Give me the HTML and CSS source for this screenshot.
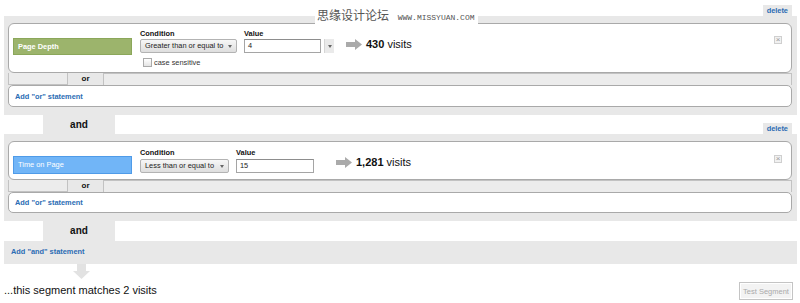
FILE: index.html
```html
<!DOCTYPE html>
<html lang="en">
<head>
  <meta charset="UTF-8" />
  <title>Advanced Segment</title>
  <link rel="stylesheet" href="styles.css">
</head>
<body>
  <div class="page">
    <div class="wm">思缘设计论坛 <span>WWW.MISSYUAN.COM</span></div>

    <div class="tabs top">
      <a class="delete" href="#">delete</a>
    </div>
    <div class="group">
      <div class="card cond first">
        <div class="field green">Page Depth</div>
        <div class="col">
          <div class="lbl">Condition</div>
          <div class="select gte">Greater than or equal to<span class="caret"></span></div>
          <div class="check"><span class="box"></span>case sensitive</div>
        </div>
        <div class="col">
          <div class="lbl">Value</div>
          <div class="value-row">
            <div class="input v1">4</div>
            <div class="drop"><span class="caret"></span></div>
          </div>
        </div>
        <div class="result r1">
          <svg width="16" height="11" viewBox="0 0 16 11"><path d="M0 3h9V0l7 5.5-7 5.5V8H0z" fill="#aaa"/></svg>
          <span><b>430</b> visits</span>
        </div>
        <span class="close">&times;</span>
      </div>
      <div class="or-row">
        <div class="or-side left"></div>
        <div class="or">or</div>
        <div class="or-side right"></div>
      </div>
      <div class="card add"><a href="#">Add "or" statement</a></div>
    </div>

    <div class="tabs">
      <div class="and">and</div>
      <a class="delete" href="#">delete</a>
    </div>
    <div class="group">
      <div class="card cond second">
        <div class="field blue">Time on Page</div>
        <div class="col">
          <div class="lbl">Condition</div>
          <div class="select lte">Less than or equal to<span class="caret"></span></div>
        </div>
        <div class="col">
          <div class="lbl">Value</div>
          <div class="input v2">15</div>
        </div>
        <div class="result r2">
          <svg width="16" height="11" viewBox="0 0 16 11"><path d="M0 3h9V0l7 5.5-7 5.5V8H0z" fill="#aaa"/></svg>
          <span><b>1,281</b> visits</span>
        </div>
        <span class="close">&times;</span>
      </div>
      <div class="or-row">
        <div class="or-side left"></div>
        <div class="or">or</div>
        <div class="or-side right"></div>
      </div>
      <div class="card add short"><a href="#">Add "or" statement</a></div>
    </div>

    <div class="tabs last">
      <div class="and">and</div>
    </div>
    <div class="add-and"><a href="#">Add "and" statement</a></div>

    <svg class="down" width="17" height="15" viewBox="0 0 17 15"><path d="M4 0h9v7h4l-8.5 8L0 7h4z" fill="#e2e2e2"/></svg>

    <div class="footer">
      <div class="summary">...this segment matches 2 visits</div>
      <button class="test" type="button">Test Segment</button>
    </div>
  </div>
</body>
</html>
```

FILE: styles.css
```css
body {
  margin: 0;
  font-family: "Liberation Sans", Arial, sans-serif;
  font-size: 7.4px;
  color: #222;
  background: #fff;
}
a {
  color: #2c6cb4;
  text-decoration: none;
  font-weight: bold;
}
.page {
  position: relative;
  width: 793px;
  padding-left: 4px;
}

/* watermark */
.wm {
  position: absolute;
  left: 315px;
  top: 8px;
  background: #fff;
  padding: 0 3px 1px 2px;
  color: #555;
  font-family: "Noto Sans CJK SC", sans-serif;
  font-size: 12px;
  line-height: 14px;
}
.wm span {
  font-family: "Liberation Mono", monospace;
  font-size: 8px;
  margin-left: 6px;
  color: #555;
}

/* tab rows above each block */
.tabs {
  display: flex;
  align-items: flex-end;
  height: 19px;
}
.tabs.top {
  height: 16px;
}
.tabs.last {
  height: 20px;
}
.and {
  width: 72px;
  height: 100%;
  margin-left: 39px;
  background: #e8e8e8;
  font-size: 10px;
  font-weight: bold;
  text-align: center;
  line-height: 19px;
  color: #111;
}
.delete {
  margin-left: auto;
  margin-right: 5px;
  background: #e8e8e8;
  line-height: 11px;
  height: 11px;
  padding: 0 4px;
}

/* grey block */
.group {
  background: #e8e8e8;
  padding: 7px 5px 8px 4px;
}
.card {
  background: #fff;
  border: 1px solid #a9a9a9;
  border-radius: 6px;
}
.cond {
  display: flex;
  align-items: flex-start;
  gap: 8px;
  height: 44px;
  padding: 4px 9px 0 4px;
}
.cond.second {
  height: 32px;
  padding-top: 5px;
}
.field {
  width: 113px;
  height: 15px;
  margin-top: 10px;
  padding-left: 4px;
  line-height: 15px;
  color: #fff;
  font-weight: bold;
}
.field.green {
  background: #9cb46c;
  border: 1px solid #8ba75a;
}
.field.blue {
  background: #71b5f7;
  border: 1px solid #4f9be8;
  font-weight: normal;
  height: 16px;
  line-height: 16px;
  margin-top: 9px;
}
.col {
  display: flex;
  flex-direction: column;
}
.col + .col {
  margin-left: -1px;
}
.lbl {
  font-weight: bold;
  height: 11px;
  line-height: 11px;
  color: #111;
}
.select {
  position: relative;
  height: 12px;
  line-height: 12px;
  padding: 0 12px 0 4px;
  border: 1px solid #b3b3b3;
  border-radius: 2px;
  background: linear-gradient(#f7f7f7, #dedede);
  white-space: nowrap;
}
.select.gte {
  width: 79px;
}
.select.lte {
  width: 71px;
  margin-top: 1px;
}
.caret {
  position: absolute;
  right: 4px;
  top: 5px;
  border-left: 2.5px solid transparent;
  border-right: 2.5px solid transparent;
  border-top: 3px solid #666;
}
.check {
  display: flex;
  align-items: center;
  height: 11px;
  margin-top: 4px;
  padding-left: 3px;
  color: #333;
}
.check .box {
  width: 7px;
  height: 7px;
  border: 1px solid #aaa;
  background: linear-gradient(#fff, #e4e4e4);
  margin-right: 2px;
}
.value-row {
  display: flex;
  gap: 3px;
}
.input {
  height: 12px;
  line-height: 12px;
  padding-left: 3px;
  border: 1px solid #a5a5a5;
  border-top-color: #8d8d8d;
  background: #fff;
}
.input.v1 {
  width: 72px;
}
.input.v2 {
  width: 73px;
  margin-top: 1px;
}
.drop {
  position: relative;
  width: 9px;
  height: 14px;
  background: #eaeaea;
  border-left: 1px solid #d6d6d6;
}
.drop .caret {
  right: 2px;
  top: 6px;
}
.result {
  display: flex;
  align-items: center;
  gap: 4px;
  height: 12px;
  margin-top: 10px;
  font-size: 11px;
  line-height: 12px;
  color: #111;
}
.result svg {
  display: block;
}
.result.r1 {
  margin-left: 4px;
}
.result.r2 {
  margin-left: 14px;
  margin-top: 9px;
}
.close {
  margin-left: auto;
  margin-top: 8px;
  width: 6px;
  height: 6px;
  border: 1px solid #cfcfcf;
  background: #f1f1f1;
  color: #999;
  font-size: 8px;
  line-height: 6px;
  text-align: center;
}

/* or row */
.or-row {
  display: flex;
  height: 12px;
}
.or-side {
  background: #ececec;
  border: 1px solid #c2c2c2;
  border-top: none;
}
.or-side.left {
  width: 58px;
}
.or-side.right {
  flex: 1;
  border-bottom: none;
  border-top: 1px solid #c2c2c2;
}
.or {
  width: 35px;
  text-align: center;
  font-size: 8px;
  font-weight: bold;
  line-height: 12px;
  color: #111;
}
.add {
  height: 20px;
  padding-left: 6px;
  line-height: 21px;
  border-radius: 5px;
}
.add.short {
  height: 19px;
  line-height: 20px;
}

/* bottom */
.add-and {
  background: #e8e8e8;
  height: 23px;
  padding-left: 7px;
  line-height: 22px;
}
.down {
  display: block;
  margin-left: 69px;
}
.footer {
  display: flex;
  justify-content: space-between;
  align-items: flex-end;
  margin-top: 3px;
  padding-right: 4px;
}
.summary {
  font-size: 11px;
  line-height: 13px;
  margin-bottom: 3px;
  color: #111;
}
.test {
  font-family: "Liberation Sans", Arial, sans-serif;
  font-size: 7.5px;
  color: #aaa;
  background: #f3f3f3;
  border: 1px solid #c4c4c4;
  box-shadow: inset 0 0 0 1px #fff;
  height: 18px;
  width: 54px;
  padding: 0;
  white-space: nowrap;
}
```
